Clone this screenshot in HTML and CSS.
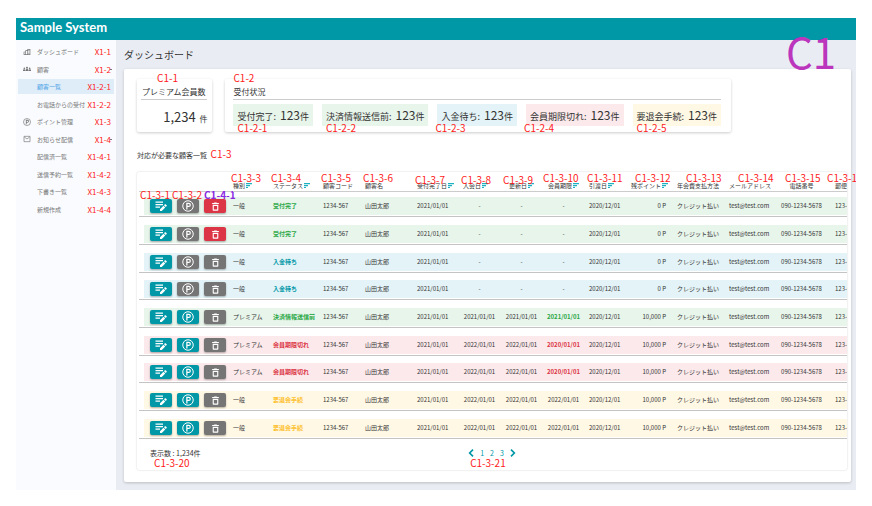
FILE: index.html
```html
<!DOCTYPE html>
<html lang="ja">
<head>
    <meta charset="UTF-8">
    <meta name="viewport" content="width=device-width, initial-scale=1.0">
    <title>Sample System</title>
    <link rel="stylesheet" href="styles.css">
</head>
<body>
    <!-- icons -->
    <svg class="icon-defs" aria-hidden="true">
        <symbol id="i-edit" viewBox="0 0 24 24">
            <path d="M1 3h15v2.500H1zM1 8h15v2.500H1zM1 13h9v2.500H1z"/>
            <path d="M10 18.500V22h3.500l7-7-3.500-3.500zM18 10.500l3.500 3.500 1.800-1.800c.5-.5.5-1 0-1.500l-2-2c-.5-.5-1-.5-1.500 0z"/>
        </symbol>
        <symbol id="i-point" viewBox="0 0 24 24">
            <circle cx="12" cy="12" r="10.500" fill="none" stroke="currentColor" stroke-width="2"/>
            <path d="M8.500 5.500h5a4.300 4.300 0 0 1 0 8.600H11V19H8.500zM11 8v3.700h2.500a1.800 1.800 0 0 0 0-3.700z" fill-rule="evenodd"/>
        </symbol>
        <symbol id="i-trash" viewBox="0 0 24 24">
            <path d="M9 1h6l1 1.500h5V5.500H3V2.500h5zM4.500 7.500h15V21a2 2 0 0 1-2 2h-11a2 2 0 0 1-2-2zM7.500 10.500V20h9v-9.500z" fill-rule="evenodd"/>
        </symbol>
        <symbol id="i-sort" viewBox="0 0 12 10">
            <path d="M0 0h12v2.500H0zM0 4h8v2.500H0zM0 8h4v2H0z"/>
        </symbol>
        <symbol id="i-building" viewBox="0 0 24 24">
            <path d="M2 21V11h5V7h6V3h9v18zM4 19h3v-6H4zM9 19h4V9H9zM15 19h5V5h-5zM16 7h3v2h-3zM16 11h3v2h-3zM16 15h3v2h-3z" fill-rule="evenodd"/>
        </symbol>
        <symbol id="i-group" viewBox="0 0 24 24">
            <circle cx="4" cy="10" r="2.500"/><circle cx="12" cy="8" r="3"/><circle cx="20" cy="10" r="2.500"/>
            <path d="M0 18v-2c0-4 6-4 7-1v3zM8 18v-3c0-4 8-4 8 0v3zM17 18v-3c1-3 7-3 7 1v2z"/>
        </symbol>
        <symbol id="i-mail" viewBox="0 0 24 24">
            <path d="M3 4h18v16H3z" fill="none" stroke="currentColor" stroke-width="2"/>
            <path d="M4 6l8 6 8-6" fill="none" stroke="currentColor" stroke-width="2"/>
        </symbol>
        <symbol id="i-prev" viewBox="0 0 8 12">
            <path d="M7 1L2 6l5 5" fill="none" stroke="currentColor" stroke-width="2.500"/>
        </symbol>
        <symbol id="i-next" viewBox="0 0 8 12">
            <path d="M1 1l5 5-5 5" fill="none" stroke="currentColor" stroke-width="2.500"/>
        </symbol>
    </svg>

    <div class="app">
        <header class="topbar">Sample System</header>
        <span class="screen-id">C1</span>

        <div class="layout">
            <nav class="sidebar">
                <a href="#"><svg><use href="#i-building"/></svg>ダッシュボード<span class="nav-id">X1-1</span></a>
                <a href="#" class="open"><svg><use href="#i-group"/></svg>顧客<span class="nav-id">X1-2</span></a>
                <a href="#" class="sub active">顧客一覧<span class="nav-id">X1-2-1</span></a>
                <a href="#" class="sub">お電話からの受付<span class="nav-id">X1-2-2</span></a>
                <a href="#"><svg><use href="#i-point"/></svg>ポイント管理<span class="nav-id">X1-3</span></a>
                <a href="#" class="open"><svg><use href="#i-mail"/></svg>お知らせ配信<span class="nav-id">X1-4</span></a>
                <a href="#" class="sub">配信済一覧<span class="nav-id">X1-4-1</span></a>
                <a href="#" class="sub">送信予約一覧<span class="nav-id">X1-4-2</span></a>
                <a href="#" class="sub">下書き一覧<span class="nav-id">X1-4-3</span></a>
                <a href="#" class="sub">新規作成<span class="nav-id">X1-4-4</span></a>
            </nav>

            <main class="main">
                <h1>ダッシュボード</h1>

                <div class="panel">
                    <div class="stats">
                        <section class="stat">
                            <span class="note note-top">C1-1</span>
                            <h2>プレミアム会員数</h2>
                            <p class="total"><b>1,234</b> 件</p>
                        </section>
                        <section class="stat stat-wide">
                            <span class="note note-top">C1-2</span>
                            <h2>受付状況</h2>
                            <div class="chips">
                                <div class="chip green">受付完了:<b>123</b>件<span class="note">C1-2-1</span></div>
                                <div class="chip green">決済情報送信前:<b>123</b>件<span class="note">C1-2-2</span></div>
                                <div class="chip blue">入金待ち:<b>123</b>件<span class="note out">C1-2-3</span></div>
                                <div class="chip red">会員期限切れ:<b>123</b>件<span class="note out">C1-2-4</span></div>
                                <div class="chip yellow">要退会手続:<b>123</b>件<span class="note">C1-2-5</span></div>
                            </div>
                        </section>
                    </div>

                    <h3>対応が必要な顧客一覧 <span class="note-inline">C1-3</span></h3>

                    <div class="list">
                        <div class="table-wrap">
                            <table>
                                <colgroup>
                                    <col class="w-act"><col class="w-type"><col class="w-status"><col class="w-date">
                                    <col class="w-mid"><col class="w-point"><col class="w-date"><col class="w-date">
                                    <col class="w-date"><col class="w-date"><col class="w-point"><col class="w-mid">
                                    <col class="w-mid"><col class="w-tel"><col class="w-zip">
                                </colgroup>
                                <thead>
                                    <tr>
                                        <th><div class="action-notes"><span>C1-3-1</span><span>C1-3-2</span><span class="purple">C1-4-1</span></div></th>
                                        <th><span class="note">C1-3-3</span>種別<button class="sort" aria-label="並び替え"><svg><use href="#i-sort"/></svg></button></th>
                                        <th><span class="note">C1-3-4</span>ステータス<button class="sort" aria-label="並び替え"><svg><use href="#i-sort"/></svg></button></th>
                                        <th><span class="note">C1-3-5</span>顧客コード</th>
                                        <th><span class="note">C1-3-6</span>顧客名</th>
                                        <th><span class="note low">C1-3-7</span>受付完了日<button class="sort" aria-label="並び替え"><svg><use href="#i-sort"/></svg></button></th>
                                        <th><span class="note low">C1-3-8</span>入会日<button class="sort" aria-label="並び替え"><svg><use href="#i-sort"/></svg></button></th>
                                        <th class="date"><span class="note low">C1-3-9</span>更新日<button class="sort" aria-label="並び替え"><svg><use href="#i-sort"/></svg></button></th>
                                        <th class="date"><span class="note back">C1-3-10</span>会員期限<button class="sort" aria-label="並び替え"><svg><use href="#i-sort"/></svg></button></th>
                                        <th><span class="note">C1-3-11</span>引渡日<button class="sort" aria-label="並び替え"><svg><use href="#i-sort"/></svg></button></th>
                                        <th><span class="note in">C1-3-12</span>残ポイント<button class="sort" aria-label="並び替え"><svg><use href="#i-sort"/></svg></button></th>
                                        <th><span class="note far">C1-3-13</span>年会費支払方法</th>
                                        <th><span class="note far">C1-3-14</span>メールアドレス</th>
                                        <th class="tel"><span class="note in">C1-3-15</span>電話番号</th>
                                        <th>郵便番号</th>
                                    </tr>
                                </thead>
                                <tbody id="rows"></tbody>
                            </table>
                        </div>
                        <span class="note note-edge">C1-3-16</span>

                        <div class="list-footer">
                            <div class="count">表示数 : 1,234件<span class="note">C1-3-20</span></div>
                            <div class="pager">
                                <a href="#" aria-label="前へ"><svg><use href="#i-prev"/></svg></a>
                                <a href="#">1</a>
                                <a href="#">2</a>
                                <a href="#">3</a>
                                <a href="#" aria-label="次へ"><svg><use href="#i-next"/></svg></a>
                                <span class="note">C1-3-21</span>
                            </div>
                        </div>
                    </div>
                </div>
            </main>
        </div>
    </div>

    <script src="script.js"></script>
</body>
</html>
```
FILE: styles.css
```css
:root {
    --teal: #0097a7;
    --gray: #757575;
    --red: #dc3545;
    --note: #ff1a1a;
    --green-bg: #e8f5eb;
    --blue-bg: #e3f3f7;
    --red-bg: #fbe9eb;
    --yellow-bg: #fff8e5;
}

* {
    margin: 0;
    padding: 0;
    box-sizing: border-box;
}

body {
    font-family: 'Noto Sans CJK JP', 'Noto Sans', sans-serif;
    font-size: 6px;
    color: #333;
    background: #fff;
}

a {
    color: inherit;
    text-decoration: none;
}

button {
    border: none;
    cursor: pointer;
}

svg {
    fill: currentColor;
}

.icon-defs {
    position: absolute;
    width: 0;
    height: 0;
}

.app {
    position: relative;
    margin: 18px 16px 16px;
    overflow: hidden;
}

.topbar {
    height: 22px;
    padding-left: 4px;
    background: var(--teal);
    color: #fff;
    font-family: Lato, 'Noto Sans', sans-serif;
    font-size: 13px;
    font-weight: bold;
    line-height: 18px;
}

.screen-id {
    position: absolute;
    top: 12px;
    right: 20px;
    font-size: 42px;
    line-height: 42px;
    color: #bb35bd;
}

.layout {
    display: flex;
    background: #f9fbfe;
}

/* sidebar */
.sidebar {
    flex: 0 0 100px;
    display: grid;
    grid-template-rows: repeat(10, 1fr);
    height: 175px;
    margin-top: 4px;
    padding: 0 2px;
}

.sidebar a {
    position: relative;
    display: flex;
    align-items: center;
    height: 15px;
    padding: 0 3px 0 5px;
    color: #777;
    white-space: nowrap;
}

.sidebar svg {
    width: 8px;
    height: 8px;
    margin-right: 6px;
}

.sidebar .sub {
    padding-left: 19px;
}

.sidebar .active {
    background: #dfedf9;
    color: #4aa3e6;
}

.sidebar .open::after {
    content: '';
    position: absolute;
    right: 2px;
    width: 2px;
    height: 1px;
    background: #777;
}

.nav-id {
    margin-left: auto;
    font-size: 8px;
    color: var(--note);
}

/* main */
.main {
    flex: 1;
    min-width: 0;
    padding: 8px 5px 8px 8px;
    background: #e9edf3;
}

h1 {
    font-size: 10px;
    font-weight: normal;
    line-height: 14px;
    margin-bottom: 7px;
}

.panel {
    padding: 10px 4px 12px 13px;
    background: #fff;
    border-radius: 2px;
    box-shadow: 0 1px 3px rgba(0,0,0,0.2);
}

.stats {
    display: flex;
    gap: 13px;
}

.stat {
    position: relative;
    height: 53px;
    padding: 7px 5px 0 4px;
    border-radius: 2px;
    box-shadow: 0 1px 3px rgba(0,0,0,0.2);
}

.stat-wide {
    padding: 7px 10px 0 8px;
}

h2 {
    padding: 0 2px 1px 1px;
    border-bottom: 1px solid #ccc;
    font-size: 8px;
    font-weight: normal;
    line-height: 12px;
}

.stat-wide h2 {
    padding-left: 0;
}

.total {
    text-align: right;
    font-size: 8px;
    line-height: 34px;
}

.total b {
    margin-right: 2px;
    font-size: 13px;
    font-weight: normal;
}

.chips {
    display: flex;
    gap: 9px;
    margin-top: 4px;
}

.chip {
    position: relative;
    height: 22px;
    padding: 0 4px;
    font-size: 9px;
    line-height: 22px;
    white-space: nowrap;
    background: var(--band);
}

.chip b {
    margin-left: 4px;
    font-size: 12px;
    font-weight: normal;
}

.green { --band: var(--green-bg); --status: #28a745; }
.blue { --band: var(--blue-bg); --status: #0097a7; }
.red { --band: var(--red-bg); --status: #dc3545; }
.yellow { --band: var(--yellow-bg); --status: #ffc02e; }

h3 {
    margin: 16px 0 9px;
    font-size: 7px;
    font-weight: normal;
    line-height: 15px;
}

/* screen part numbers */
.note {
    position: absolute;
    top: 1px;
    left: -2px;
    font-size: 10px;
    font-weight: normal;
    line-height: 10px;
    white-space: nowrap;
    color: var(--note);
}

.note-inline {
    margin-left: 2px;
    font-size: 10px;
    line-height: 10px;
    color: var(--note);
}

.note-top {
    top: -6px;
    left: 8px;
}

.stat:first-child .note-top {
    left: 20px;
}

.chip .note {
    top: 19px;
    left: 4px;
}

.chip .out { left: -2px; }

.note.low { top: 3px; }
.note.back { left: -4px; }
.note.in { left: 4px; }
.note.far { left: 9px; }

.note-edge {
    left: auto;
    right: -9px;
    width: 29px;
    overflow: hidden;
}

.action-notes {
    position: absolute;
    top: 18px;
    left: 1px;
    display: flex;
    gap: 2px;
    font-size: 10px;
    line-height: 10px;
    color: var(--note);
}

.purple {
    font-weight: bold;
    color: #8a2be2;
}

/* customer list */
.list {
    position: relative;
    border-radius: 2px;
    box-shadow: 0 0 2px rgba(0,0,0,0.2);
}

.table-wrap {
    padding-left: 2px;
    overflow: hidden;
}

table {
    width: 755px;
    table-layout: fixed;
    border-collapse: separate;
    border-spacing: 0;
}

.w-act { width: 94px; }
.w-type { width: 40px; }
.w-status { width: 50px; }
.w-date { width: 42px; }
.w-mid { width: 52px; }
.w-point { width: 46px; }
.w-tel { width: 54px; }

th {
    position: relative;
    height: 20px;
    padding-bottom: 1px;
    border-bottom: 1px solid #ccc;
    font-weight: normal;
    line-height: 8px;
    text-align: left;
    vertical-align: bottom;
    white-space: nowrap;
}

td {
    height: 28px;
    padding-bottom: 1px;
    border-bottom: 1px solid #c4c4c4;
    line-height: 18px;
    vertical-align: bottom;
    white-space: nowrap;
    background: linear-gradient(var(--band), var(--band)) 0 calc(100% - 1px) / 100% 18px no-repeat;
}

tr:nth-child(3n+1) td { height: 27px; }
tbody tr:first-child td { height: 25px; }

td:first-child {
    padding-left: 11px;
    background-position-x: 5px;
}

.date {
    padding-right: 9px;
    text-align: center;
}

.tel {
    padding-right: 13px;
    text-align: center;
}

.point {
    padding-right: 11px;
    text-align: right;
}

.strong {
    font-weight: bold;
    color: var(--status);
}

.sort {
    width: 6px;
    height: 5px;
    margin-left: 1px;
    background: none;
    color: #1cb0c0;
}

.sort svg {
    display: block;
    width: 6px;
    height: 5px;
}

.actions {
    display: flex;
    align-items: center;
    gap: 5px;
    height: 18px;
}

.btn {
    display: flex;
    align-items: center;
    justify-content: center;
    width: 22px;
    height: 14px;
    border-radius: 2px;
    background: var(--teal);
    color: #fff;
    box-shadow: 0 1px 2px rgba(0,0,0,0.3);
}

.btn svg {
    width: 12px;
    height: 12px;
}

.btn.off { background: var(--gray); }
.btn.danger { background: var(--red); }

.btn.small svg {
    width: 9px;
    height: 9px;
}

.list-footer {
    display: grid;
    grid-template-columns: 1fr auto 1fr;
    height: 31px;
    padding: 8px 13px 0;
    line-height: 12px;
}

.count {
    position: relative;
    font-size: 7px;
}

.pager {
    position: relative;
    display: flex;
    align-items: center;
    gap: 6px;
    height: 12px;
    font-size: 7px;
    color: var(--teal);
}

.pager svg {
    display: block;
    width: 6px;
    height: 8px;
}

.list-footer .note {
    top: 11px;
    left: 4px;
}

.list-footer .pager .note {
    left: 2px;
}
```
FILE: script.js
```js
const customers = [
    { color: 'green', type: '一般', status: '受付完了', join: '-', update: '-', limit: '-', point: '0 P', canDelete: true },
    { color: 'green', type: '一般', status: '受付完了', join: '-', update: '-', limit: '-', point: '0 P', canDelete: true },
    { color: 'blue', type: '一般', status: '入金待ち', join: '-', update: '-', limit: '-', point: '0 P' },
    { color: 'blue', type: '一般', status: '入金待ち', join: '-', update: '-', limit: '-', point: '0 P' },
    { color: 'green', type: 'プレミアム', status: '決済情報送信前', join: '2021/01/01', update: '2021/01/01', limit: '2021/01/01', point: '10,000 P', alert: true },
    { color: 'red', type: 'プレミアム', status: '会員期限切れ', join: '2022/01/01', update: '2022/01/01', limit: '2020/01/01', point: '10,000 P', alert: true },
    { color: 'red', type: 'プレミアム', status: '会員期限切れ', join: '2022/01/01', update: '2022/01/01', limit: '2020/01/01', point: '10,000 P', alert: true },
    { color: 'yellow', type: '一般', status: '要退会手続', join: '2022/01/01', update: '2022/01/01', limit: '2022/01/01', point: '10,000 P' },
    { color: 'yellow', type: '一般', status: '要退会手続', join: '2022/01/01', update: '2022/01/01', limit: '2022/01/01', point: '10,000 P' }
];

document.getElementById('rows').innerHTML = customers.map(c => `
    <tr class="${c.color}">
        <td><div class="actions">
            <button class="btn" aria-label="編集"><svg><use href="#i-edit"/></svg></button>
            <button class="btn ${c.join === '-' ? 'off' : ''}" aria-label="ポイント"><svg><use href="#i-point"/></svg></button>
            <button class="btn small ${c.canDelete ? 'danger' : 'off'}" aria-label="削除"><svg><use href="#i-trash"/></svg></button>
        </div></td>
        <td>${c.type}</td>
        <td class="strong">${c.status}</td>
        <td>1234-567</td>
        <td>山田太郎</td>
        <td>2021/01/01</td>
        <td class="date">${c.join}</td>
        <td class="date">${c.update}</td>
        <td class="date ${c.alert ? 'strong' : ''}">${c.limit}</td>
        <td>2020/12/01</td>
        <td class="point">${c.point}</td>
        <td>クレジット払い</td>
        <td>test@test.com</td>
        <td class="tel">090-1234-5678</td>
        <td>123-4567</td>
    </tr>`).join('');
```
